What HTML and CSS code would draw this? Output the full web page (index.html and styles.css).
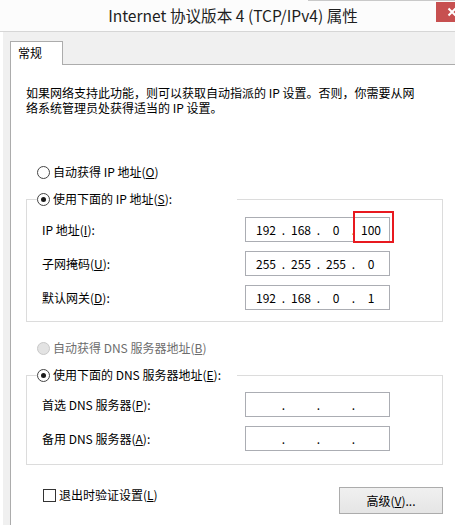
FILE: index.html
```html
<!DOCTYPE html>
<html lang="zh-CN">
<head>
<meta charset="utf-8">
<title>Internet 协议版本 4 (TCP/IPv4) 属性</title>
<link rel="stylesheet" href="styles.css">
</head>
<body>
<div class="window">
  <div class="titlebar">
    <div class="title">Internet 协议版本 4 (TCP/IPv4) 属性</div>
    <div class="close"><svg width="30" height="20" viewBox="0 0 30 20"><path d="M12.5 6.5 L19.5 13.5 M19.5 6.5 L12.5 13.5" stroke="#fff" stroke-width="2"/></svg></div>
  </div>
  <div class="client">
    <div class="tabs"><div class="tab">常规</div></div>
    <div class="panel">
      <div class="intro">
        <div class="intro-line">如果网络支持此功能，则可以获取自动指派的 IP 设置。否则，你需要从网</div>
        <div class="intro-line">络系统管理员处获得适当的 IP 设置。</div>
      </div>

      <div class="option"><span class="radio"></span>自动获得 IP 地址(<u>O</u>)</div>

      <fieldset class="group">
        <legend class="option legend"><span class="radio checked"></span>使用下面的 IP 地址(<u>S</u>):</legend>
        <div class="fields ip-fields">
          <div class="label">IP 地址(<u>I</u>):</div>
          <div class="cell">
            <div class="ipbox"><span class="oct">192</span><span class="dot">.</span><span class="oct">168</span><span class="dot">.</span><span class="oct">0</span><span class="dot">.</span><span class="oct">100</span></div>
            <div class="mark"></div>
          </div>
          <div class="label">子网掩码(<u>U</u>):</div>
          <div class="ipbox"><span class="oct">255</span><span class="dot">.</span><span class="oct">255</span><span class="dot">.</span><span class="oct">255</span><span class="dot">.</span><span class="oct">0</span></div>
          <div class="label">默认网关(<u>D</u>):</div>
          <div class="ipbox"><span class="oct">192</span><span class="dot">.</span><span class="oct">168</span><span class="dot">.</span><span class="oct">0</span><span class="dot">.</span><span class="oct">1</span></div>
        </div>
      </fieldset>

      <div class="option disabled dns-auto"><span class="radio"></span>自动获得 DNS 服务器地址(<u>B</u>)</div>

      <fieldset class="group dns-group">
        <legend class="option legend"><span class="radio checked"></span>使用下面的 DNS 服务器地址(<u>E</u>):</legend>
        <div class="fields dns-fields">
          <div class="label">首选 DNS 服务器(<u>P</u>):</div>
          <div class="ipbox"><span class="oct"></span><span class="dot">.</span><span class="oct"></span><span class="dot">.</span><span class="oct"></span><span class="dot">.</span><span class="oct"></span></div>
          <div class="label">备用 DNS 服务器(<u>A</u>):</div>
          <div class="ipbox"><span class="oct"></span><span class="dot">.</span><span class="oct"></span><span class="dot">.</span><span class="oct"></span><span class="dot">.</span><span class="oct"></span></div>
        </div>
      </fieldset>

      <div class="footer">
        <div class="check-row"><span class="checkbox"></span>退出时验证设置(<u>L</u>)</div>
        <div class="button">高级(<u>V</u>)...</div>
      </div>
    </div>
  </div>
</div>
</body>
</html>
```

FILE: styles.css
```css
html, body {
  margin: 0;
  padding: 0;
}
body {
  width: 455px;
  height: 525px;
  overflow: hidden;
  background: #fff;
  font-family: "Noto Sans CJK SC", "Noto Sans", sans-serif;
  font-size: 12px;
  color: #000;
}
u {
  text-decoration: underline;
  text-underline-offset: 1px;
}

.window {
  display: flex;
  flex-direction: column;
  height: 525px;
}

.titlebar {
  display: flex;
  align-items: flex-start;
  height: 31px;
  flex-shrink: 0;
  border-bottom: 1px solid #d6d6d6;
  background: linear-gradient(#c9c9c9, #c9c9c9) no-repeat 308px 0 / 100% 1px, #fcfcfc;
}
.title {
  flex: 1;
  padding-left: 30px;
  text-align: center;
  font-size: 15.6px;
  line-height: 31px;
  color: #1e1e1e;
  white-space: nowrap;
}
.close {
  width: 19px;
  height: 20px;
  margin-top: 2px;
  background: #c75050;
  overflow: hidden;
  display: flex;
}
.close svg {
  flex-shrink: 0;
}

.client {
  flex: 1;
  border-left: 3px solid #fff;
  background: #f0f0f0;
  padding: 9px 0 0 7px;
  display: flex;
  flex-direction: column;
}

.tabs {
  display: flex;
}
.tab {
  position: relative;
  z-index: 1;
  width: 53px;
  height: 24px;
  box-sizing: border-box;
  border: 1px solid #acacac;
  border-bottom: none;
  margin-bottom: -1px;
  background: #fff;
  padding-left: 7px;
  line-height: 21px;
}

.panel {
  flex: 1;
  width: 470px;
  background: #fff;
  border: 1px solid #acacac;
  border-right: none;
  border-bottom: none;
  padding-left: 15px;
}

.intro {
  margin-top: 20px;
  display: flex;
  flex-direction: column;
}
.intro-line {
  height: 15px;
  line-height: 15px;
  white-space: nowrap;
}

.option {
  display: flex;
  align-items: center;
  height: 16px;
  line-height: 16px;
  white-space: nowrap;
}
.panel > .option {
  margin-left: 11px;
  margin-top: 49px;
}
.panel > .option.dns-auto {
  margin-top: 18px;
}
.disabled {
  color: #6d6d6d;
}

.radio {
  width: 13px;
  height: 13px;
  box-sizing: border-box;
  border: 1px solid #444;
  border-radius: 50%;
  background: #fff;
  margin-right: 3px;
  display: inline-flex;
  flex-shrink: 0;
}
.radio.checked::after {
  content: "";
  width: 5px;
  height: 5px;
  margin: auto;
  border-radius: 50%;
  background: #1b1b1b;
}
.disabled .radio {
  border-color: #c8c8c8;
  background: #e3e3e3;
}

.group {
  width: 417px;
  box-sizing: border-box;
  margin: 11px 0 0 0;
  border: 1px solid #dcdcdc;
  padding: 0 0 11px 10px;
  min-width: 0;
}
.dns-group {
  padding-bottom: 13px;
}
.legend {
  width: 200px;
  padding: 0;
  margin: 0;
  box-sizing: border-box;
}

.fields {
  display: grid;
  grid-template-columns: 203px 145px;
  grid-auto-rows: 25px;
  row-gap: 9px;
  align-items: center;
  padding-left: 5px;
}
.ip-fields {
  margin-top: 10px;
}
.dns-fields {
  margin-top: 9px;
}
.label {
  white-space: nowrap;
}

.cell {
  position: relative;
  height: 25px;
}
.ipbox {
  display: flex;
  align-items: center;
  height: 25px;
  box-sizing: border-box;
  border: 1px solid #abadb3;
  padding-left: 6px;
  background: #fff;
  line-height: 16px;
}
.oct {
  width: 28px;
  text-align: center;
}
.dot {
  width: 7px;
  text-align: center;
}
.mark {
  position: absolute;
  left: 108px;
  top: -6px;
  width: 41px;
  height: 32px;
  box-sizing: border-box;
  border: 2px solid #e8191f;
}

.footer {
  width: 417px;
  margin-top: 22px;
  display: flex;
  justify-content: space-between;
  align-items: flex-start;
}
.check-row {
  display: flex;
  align-items: center;
  height: 16px;
  line-height: 16px;
  margin-left: 17px;
}
.checkbox {
  width: 13px;
  height: 13px;
  box-sizing: border-box;
  border: 1px solid #333;
  background: #fff;
  margin-right: 3px;
}
.button {
  width: 104px;
  height: 27px;
  box-sizing: border-box;
  border: 1px solid #acacac;
  background: linear-gradient(#f0f0f0, #e5e5e5);
  text-align: center;
  line-height: 25px;
}
```
